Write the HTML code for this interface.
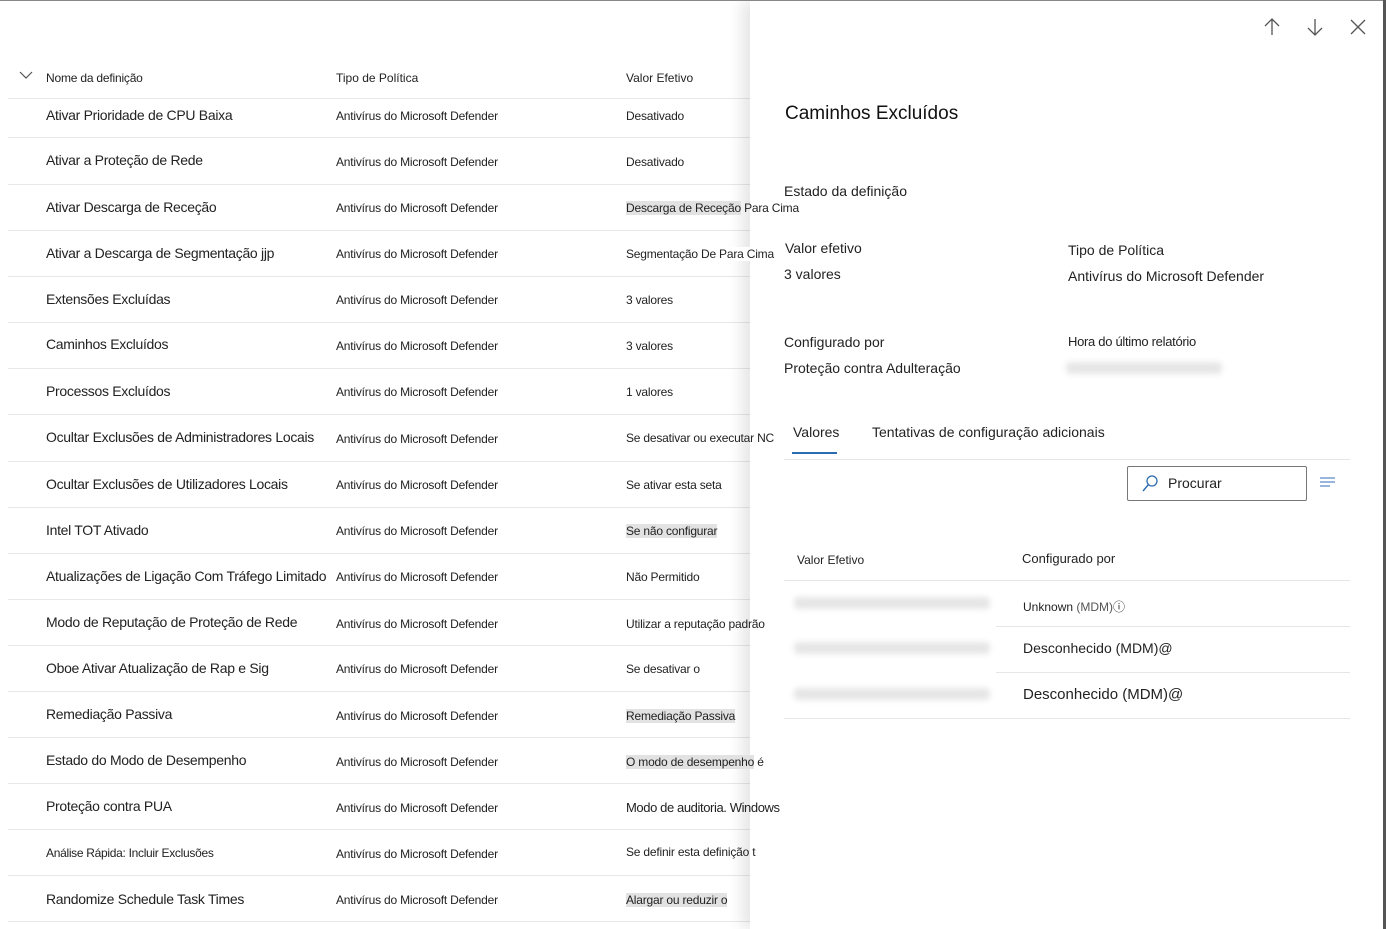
<!DOCTYPE html>
<html><head><meta charset="utf-8"><style>
*{margin:0;padding:0;box-sizing:border-box}
body{width:1386px;height:929px;overflow:hidden;background:#fff;font-family:"Liberation Sans",sans-serif;color:#222;position:relative}
.a{position:absolute;white-space:nowrap}
.n{font-size:14px;left:46px;letter-spacing:-0.3px}
.t{font-size:12px;left:336px;letter-spacing:-0.2px}
.v{font-size:12px;left:626px;letter-spacing:-0.2px}
.line{position:absolute;left:8px;width:742px;height:1px;background:#e8e8e8}
.panel{position:absolute;left:750px;top:1px;width:633px;height:928px;background:#fff;box-shadow:-8px 0 14px rgba(0,0,0,0.10);z-index:1}
.top{z-index:2}
.blur{position:absolute;height:12px;background:#e6e6e6;filter:blur(3px);border-radius:4px}
</style></head><body>
<div style="position:absolute;left:0;top:0;width:1386px;height:1px;background:#888;z-index:3"></div>
<div style="position:absolute;left:1383px;top:0;width:3px;height:929px;background:#555;z-index:3"></div>
<svg class="a" style="left:19px;top:70px" width="14" height="10"><path d="M1 2 L7 8 L13 2" fill="none" stroke="#555" stroke-width="1.2"/></svg>
<div class="a" style="left:46px;top:71px;font-size:12px;letter-spacing:-0.2px">Nome da definição</div>
<div class="a" style="left:336px;top:71px;font-size:12px">Tipo de Política</div>
<div class="a" style="left:626px;top:71px;font-size:12px">Valor Efetivo</div>
<div class="line" style="top:98px"></div>
<div class="line" style="top:137px"></div><div class="line" style="top:184px"></div><div class="line" style="top:230px"></div><div class="line" style="top:276px"></div><div class="line" style="top:322px"></div><div class="line" style="top:368px"></div><div class="line" style="top:414px"></div><div class="line" style="top:461px"></div><div class="line" style="top:507px"></div><div class="line" style="top:553px"></div><div class="line" style="top:599px"></div><div class="line" style="top:645px"></div><div class="line" style="top:691px"></div><div class="line" style="top:737px"></div><div class="line" style="top:783px"></div><div class="line" style="top:829px"></div><div class="line" style="top:875px"></div><div class="line" style="top:921px"></div>

<div class="a n" style="top:107px">Ativar Prioridade de CPU Baixa</div><div class="a t" style="top:109px">Antivírus do Microsoft Defender</div><div class="a v" style="top:109px">Desativado</div>
<div class="a n" style="top:152px">Ativar a Proteção de Rede</div><div class="a t" style="top:155px">Antivírus do Microsoft Defender</div><div class="a v" style="top:155px">Desativado</div>
<div class="a n" style="top:199px">Ativar Descarga de Receção</div><div class="a t" style="top:201px">Antivírus do Microsoft Defender</div><div class="a v top" style="top:201px"><span style="background:#e2e2e2">Descarga de Receção</span> Para Cima</div>
<div class="a n" style="top:245px">Ativar a Descarga de Segmentação jjp</div><div class="a t" style="top:247px">Antivírus do Microsoft Defender</div><div class="a v top" style="top:247px;background:#fff">Segmentação De Para Cima</div>
<div class="a n" style="top:291px">Extensões Excluídas</div><div class="a t" style="top:293px">Antivírus do Microsoft Defender</div><div class="a v" style="top:293px">3 valores</div>
<div class="a n" style="top:336px">Caminhos Excluídos</div><div class="a t" style="top:339px">Antivírus do Microsoft Defender</div><div class="a v" style="top:339px">3 valores</div>
<div class="a n" style="top:383px">Processos Excluídos</div><div class="a t" style="top:385px">Antivírus do Microsoft Defender</div><div class="a v" style="top:385px">1 valores</div>
<div class="a n" style="top:429px">Ocultar Exclusões de Administradores Locais</div><div class="a t" style="top:432px">Antivírus do Microsoft Defender</div><div class="a v top" style="top:431px">Se desativar ou executar NC</div>
<div class="a n" style="top:476px">Ocultar Exclusões de Utilizadores Locais</div><div class="a t" style="top:478px">Antivírus do Microsoft Defender</div><div class="a v" style="top:478px">Se ativar esta seta</div>
<div class="a n" style="top:522px">Intel TOT Ativado</div><div class="a t" style="top:524px">Antivírus do Microsoft Defender</div><div class="a v" style="top:524px"><span style="background:#e2e2e2">Se não configurar</span></div>
<div class="a n" style="top:568px">Atualizações de Ligação Com Tráfego Limitado</div><div class="a t" style="top:570px">Antivírus do Microsoft Defender</div><div class="a v" style="top:570px">Não Permitido</div>
<div class="a n" style="top:614px">Modo de Reputação de Proteção de Rede</div><div class="a t" style="top:617px">Antivírus do Microsoft Defender</div><div class="a v top" style="top:617px">Utilizar a reputação padrão</div>
<div class="a n" style="top:660px">Oboe Ativar Atualização de Rap e Sig</div><div class="a t" style="top:662px">Antivírus do Microsoft Defender</div><div class="a v" style="top:662px">Se desativar o</div>
<div class="a n" style="top:706px">Remediação Passiva</div><div class="a t" style="top:709px">Antivírus do Microsoft Defender</div><div class="a v" style="top:709px"><span style="background:#e2e2e2">Remediação Passiva</span></div>
<div class="a n" style="top:752px">Estado do Modo de Desempenho</div><div class="a t" style="top:755px">Antivírus do Microsoft Defender</div><div class="a v top" style="top:755px"><span style="background:#e2e2e2">O modo de desempenho</span> é</div>
<div class="a n" style="top:798px">Proteção contra PUA</div><div class="a t" style="top:801px">Antivírus do Microsoft Defender</div><div class="a v top" style="top:800px;font-size:13px;letter-spacing:-0.4px">Modo de auditoria. Windows</div>
<div class="a n" style="top:846px;font-size:12px">Análise Rápida: Incluir Exclusões</div><div class="a t" style="top:847px">Antivírus do Microsoft Defender</div><div class="a v top" style="top:845px">Se definir esta definição t</div>
<div class="a n" style="top:891px">Randomize Schedule Task Times</div><div class="a t" style="top:893px">Antivírus do Microsoft Defender</div><div class="a v" style="top:893px"><span style="background:#e2e2e2">Alargar ou reduzir o</span></div>

<div class="panel">
<svg class="a" style="left:512px;top:16px" width="20" height="20"><path d="M10 2 V18 M3 9 L10 2 L17 9" fill="none" stroke="#555" stroke-width="1.3"/></svg>
<svg class="a" style="left:555px;top:16px" width="20" height="20"><path d="M10 2 V18 M3 11 L10 18 L17 11" fill="none" stroke="#555" stroke-width="1.3"/></svg>
<svg class="a" style="left:600px;top:18px" width="16" height="16"><path d="M1 1 L15 15 M15 1 L1 15" fill="none" stroke="#555" stroke-width="1.3"/></svg>
<div class="a" style="left:35px;top:102px;font-size:19px;color:#111">Caminhos Excluídos</div>
<div class="a" style="left:34px;top:182px;font-size:14px">Estado da definição</div>
<div class="a" style="left:35px;top:239px;font-size:14px">Valor efetivo</div>
<div class="a" style="left:34px;top:265px;font-size:14px">3 valores</div>
<div class="a" style="left:318px;top:241px;font-size:14px">Tipo de Política</div>
<div class="a" style="left:318px;top:267px;font-size:14px">Antivírus do Microsoft Defender</div>
<div class="a" style="left:34px;top:333px;font-size:14px">Configurado por</div>
<div class="a" style="left:34px;top:359px;font-size:14px">Proteção contra Adulteração</div>
<div class="a" style="left:318px;top:333px;font-size:13px;letter-spacing:-0.3px">Hora do último relatório</div>
<div class="blur" style="left:316px;top:361px;width:156px"></div>
<div class="a" style="left:43px;top:423px;font-size:14px">Valores</div>
<div style="position:absolute;left:42px;top:451px;width:45px;height:2px;background:#2b6cb0"></div>
<div class="a" style="left:122px;top:423px;font-size:14px">Tentativas de configuração adicionais</div>
<div style="position:absolute;left:34px;top:458px;width:566px;height:1px;background:#e6e6e6"></div>
<div style="position:absolute;left:377px;top:465px;width:180px;height:35px;border:1.5px solid #777;border-radius:2px"></div>
<svg class="a" style="left:390px;top:473px" width="20" height="20"><circle cx="12" cy="7" r="5" fill="none" stroke="#2b6cb0" stroke-width="1.3"/><path d="M8.5 10.5 L3 17" stroke="#2b6cb0" stroke-width="1.4"/></svg>
<div class="a" style="left:418px;top:474px;font-size:14px">Procurar</div>
<svg class="a" style="left:569px;top:475px" width="18" height="14"><path d="M1 2 H16 M1 6 H16 M1 10 H11" stroke="#5b8bc7" stroke-width="1.3"/></svg>
<div class="a" style="left:47px;top:552px;font-size:12px">Valor Efetivo</div>
<div class="a" style="left:272px;top:550px;font-size:13px">Configurado por</div>
<div style="position:absolute;left:34px;top:579px;width:566px;height:1px;background:#e6e6e6"></div>
<div style="position:absolute;left:246px;top:625px;width:354px;height:1px;background:#e6e6e6"></div>
<div style="position:absolute;left:246px;top:671px;width:354px;height:1px;background:#e6e6e6"></div>
<div style="position:absolute;left:34px;top:717px;width:566px;height:1px;background:#e6e6e6"></div>
<div class="blur" style="left:44px;top:596px;width:196px"></div>
<div class="blur" style="left:44px;top:641px;width:196px"></div>
<div class="blur" style="left:44px;top:687px;width:196px"></div>
<div class="a" style="left:273px;top:597px;font-size:12px">Unknown <span style="color:#555">(MDM)</span>ⓘ</div>
<div class="a" style="left:273px;top:639px;font-size:14px">Desconhecido (MDM)@</div>
<div class="a" style="left:273px;top:685px;font-size:15px">Desconhecido (MDM)@</div>
</div>
</body></html>
